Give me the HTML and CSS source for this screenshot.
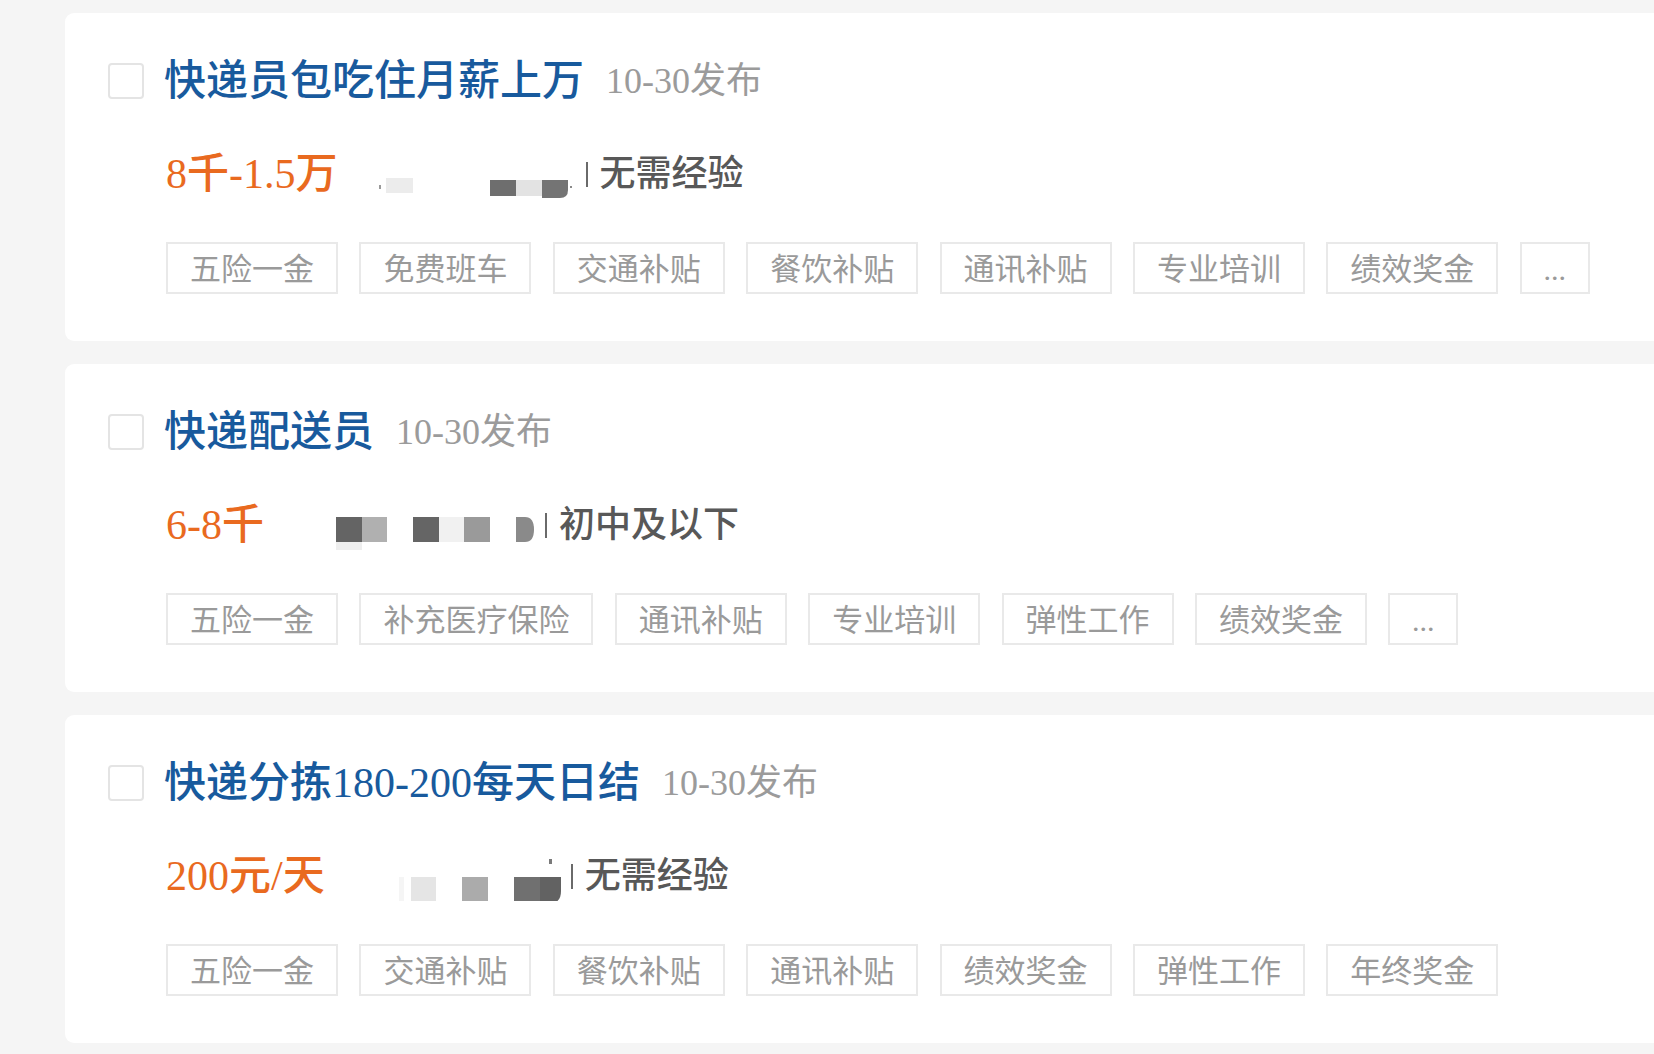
FILE: index.html
```html
<!DOCTYPE html>
<html lang="zh-CN">
<head>
<meta charset="utf-8">
<title>职位列表</title>
<link rel="stylesheet" href="styles.css">
</head>
<body>
<div class="list">

  <div class="card">
    <div class="title-row">
      <span class="check"></span>
      <span class="title">快递员包吃住月薪上万</span>
      <span class="date">10-30发布</span>
    </div>
    <div class="info-row">
      <span class="salary">8千-1.5万</span>
      <svg class="blur" width="248" height="50" viewBox="0 0 248 50">
        <rect x="41" y="36" width="2" height="4" fill="#9a9a9a"/>
        <rect x="48" y="29" width="27" height="15" fill="#ececec"/>
        <rect x="152" y="31" width="26" height="16" fill="#6e6e6e"/>
        <rect x="178" y="31" width="26" height="16" fill="#e3e3e3"/>
        <path d="M204 31 H230 V41 Q230 49 222 49 H204 Z" fill="#747474"/>
        <rect x="232" y="37" width="2" height="2" fill="#8a8a8a"/>
      </svg>
      <span class="sep"></span>
      <span class="edu">无需经验</span>
    </div>
    <div class="tags">
      <span class="tag">五险一金</span>
      <span class="tag">免费班车</span>
      <span class="tag">交通补贴</span>
      <span class="tag">餐饮补贴</span>
      <span class="tag">通讯补贴</span>
      <span class="tag">专业培训</span>
      <span class="tag">绩效奖金</span>
      <span class="tag tag-more">...</span>
    </div>
  </div>

  <div class="card">
    <div class="title-row">
      <span class="check"></span>
      <span class="title">快递配送员</span>
      <span class="date">10-30发布</span>
    </div>
    <div class="info-row">
      <span class="salary">6-8千</span>
      <svg class="blur" width="281" height="50" viewBox="0 0 281 50">
        <rect x="72" y="42" width="26" height="8" fill="#eeeeee"/>
        <rect x="72" y="17" width="26" height="25" fill="#646464"/>
        <rect x="98" y="17" width="25" height="25" fill="#b0b0b0"/>
        <rect x="149" y="17" width="26" height="25" fill="#656565"/>
        <rect x="175" y="17" width="25" height="25" fill="#f1f1f1"/>
        <rect x="200" y="17" width="26" height="25" fill="#9a9a9a"/>
        <path d="M252 17 H261 Q270 17 270 29.5 Q270 42 261 42 H252 Z" fill="#8a8a8a"/>
      </svg>
      <span class="sep"></span>
      <span class="edu">初中及以下</span>
    </div>
    <div class="tags">
      <span class="tag">五险一金</span>
      <span class="tag">补充医疗保险</span>
      <span class="tag">通讯补贴</span>
      <span class="tag">专业培训</span>
      <span class="tag">弹性工作</span>
      <span class="tag">绩效奖金</span>
      <span class="tag tag-more">...</span>
    </div>
  </div>

  <div class="card">
    <div class="title-row">
      <span class="check"></span>
      <span class="title">快递分拣180-200每天日结</span>
      <span class="date">10-30发布</span>
    </div>
    <div class="info-row">
      <span class="salary">200元/天</span>
      <svg class="blur" width="246" height="50" viewBox="0 0 246 50">
        <rect x="74" y="26" width="5" height="26" fill="#f5f5f5"/>
        <rect x="86" y="26" width="25" height="26" fill="#e5e5e5"/>
        <rect x="137" y="26" width="26" height="26" fill="#ababab"/>
        <rect x="189" y="26" width="26" height="26" fill="#707070"/>
        <path d="M215 26 H236 V40 Q236 52 226 52 H215 Z" fill="#626262"/>
        <rect x="224" y="8" width="3" height="5" fill="#7a7a7a"/>
      </svg>
      <span class="sep"></span>
      <span class="edu">无需经验</span>
    </div>
    <div class="tags">
      <span class="tag">五险一金</span>
      <span class="tag">交通补贴</span>
      <span class="tag">餐饮补贴</span>
      <span class="tag">通讯补贴</span>
      <span class="tag">绩效奖金</span>
      <span class="tag">弹性工作</span>
      <span class="tag">年终奖金</span>
    </div>
  </div>

</div>
</body>
</html>
```

FILE: styles.css
```css
html, body {
  margin: 0;
  padding: 0;
}

body {
  background: #f5f5f5;
  overflow: hidden;
  font-family: "Liberation Serif", "Noto Sans CJK SC", serif;
}

.list {
  padding-top: 13px;
  padding-left: 65px;
  margin-right: -30px;
}

.card {
  box-sizing: border-box;
  height: 328px;
  margin-bottom: 23px;
  background: #ffffff;
  border-radius: 9px;
  padding: 43px 0 0 43px;
  display: flex;
  flex-direction: column;
}

.title-row {
  display: flex;
  align-items: center;
  height: 50px;
}

.check {
  box-sizing: border-box;
  width: 36px;
  height: 36px;
  border: 2px solid #e4e4e4;
  border-radius: 4px;
  margin-right: 20px;
  flex: none;
}

.title {
  font-size: 42px;
  font-weight: 500;
  line-height: 50px;
  color: #185a9d;
  white-space: nowrap;
}

.date {
  margin-left: 22px;
  font-size: 36px;
  line-height: 50px;
  color: #9b9b9b;
  white-space: nowrap;
}

.info-row {
  display: flex;
  align-items: center;
  height: 50px;
  margin-top: 43px;
  padding-left: 58px;
}

.salary {
  font-size: 42px;
  font-weight: 500;
  line-height: 50px;
  color: #e96a1f;
  white-space: nowrap;
}

.blur {
  display: block;
  flex: none;
}

.sep {
  width: 2px;
  height: 25px;
  background: #6a6a6a;
  margin-right: 12px;
  flex: none;
}

.edu {
  font-size: 36px;
  font-weight: 500;
  line-height: 50px;
  color: #585858;
  white-space: nowrap;
}

.tags {
  display: flex;
  gap: 21.4px;
  margin-top: 43px;
  padding-left: 58px;
}

.tag {
  box-sizing: border-box;
  height: 52px;
  border: 2px solid #e9e9e9;
  padding: 3px 22px 0;
  font-size: 31px;
  line-height: 45px;
  color: #9a9a9a;
  white-space: nowrap;
}

.tag-more {
  font-size: 30px;
  padding: 3px 0 0;
  width: 70px;
  text-align: center;
}
```
